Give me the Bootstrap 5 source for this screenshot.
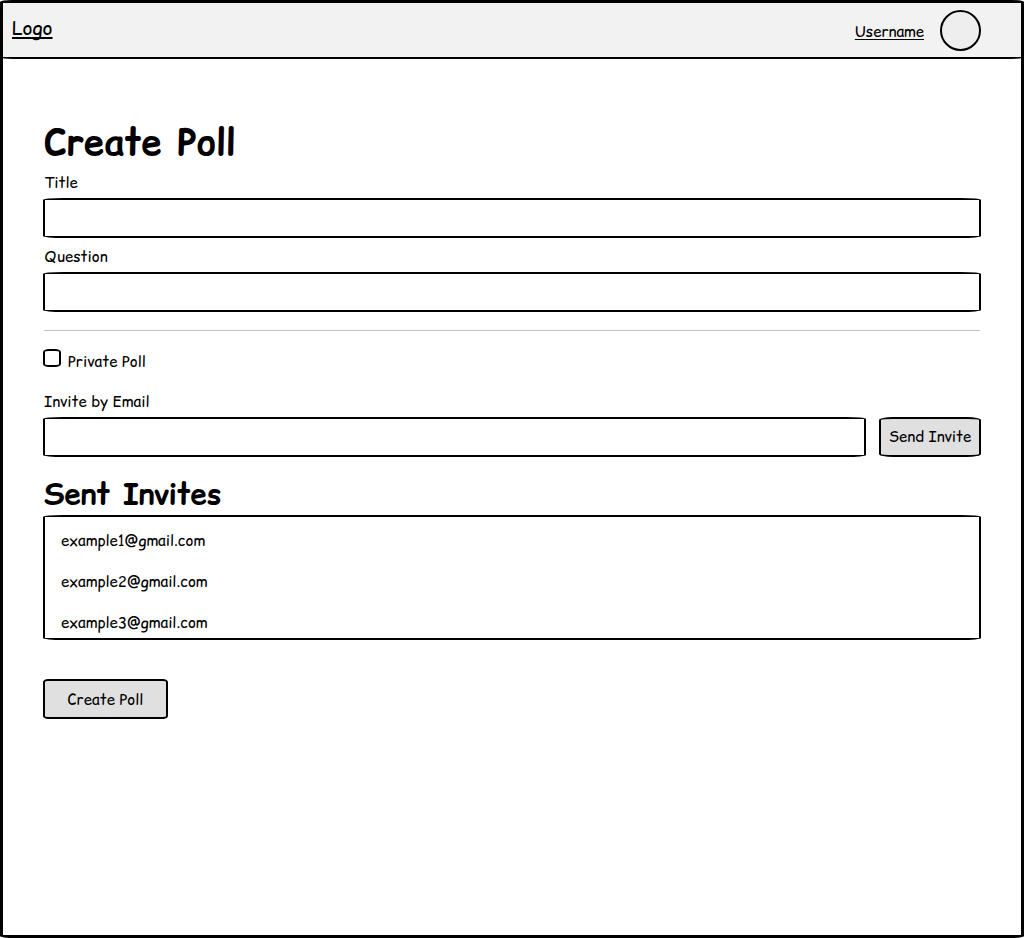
<!DOCTYPE html>
<html lang="en">
<head>
<meta charset="utf-8">
<meta name="viewport" content="width=device-width, initial-scale=1">
<title>Create Poll</title>
<link href="https://cdn.jsdelivr.net/npm/bootstrap@5.3.0/dist/css/bootstrap.min.css" rel="stylesheet">
<style>
  body { font: 400 15px/24px "Comic Relief", "Comic Neue", Lato, sans-serif; color: #000; }
  a { color: #000; text-underline-offset: 2px; text-decoration-thickness: 1px; text-decoration-skip-ink: none; }
  .frame { height: 938px; border: 3px solid #000; border-radius: 12px 12px 14px 14px / 2px; }
  .topbar { height: 56px; background: #f2f2f2; border-bottom: 2px solid #000; padding: 0 40px 0 9px; border-radius: 0 0 16px 16px / 0 0 1px 1px; }
  .logo { font-size: 19px; padding-bottom: 5px; text-decoration-thickness: 1.5px; }
  .avatar { width: 41px; height: 41px; border: 2px solid #000; background: #eee; }
  main { padding: 59px 40px 0; }
  h1 { font-size: 36.3px; line-height: 48px; font-weight: 700; margin-bottom: 5px; }
  h2 { font-size: 29.4px; line-height: 36px; font-weight: 700; margin: 19px 0 3px; }
  .label-text { padding-left: 1px; margin-bottom: 3px; display: block; }
  .question-label { margin-top: 7px; }
  .sketch, .sketch:focus { border: 2px solid #000; border-radius: 20px / 2px; height: 40px; background: #fff; box-shadow: none; }
  .sketch-btn { width: 102px; height: 40px; padding: 0; border: 2px solid #000; border-radius: 14px / 3px; background: #e0e0e0; font-size: 15px; line-height: 24px; color: #000; }
  .invite-row { gap: 13px; }
  .create { width: 125px; margin-top: 39px; padding-top: 2px; border-radius: 5px / 3px; }
  .rule { margin: 18px 1px; height: 1px; border: 0; background: #c0c0c0; opacity: 1; }
  .form-check-input.box { width: 18px; height: 18px; margin: 0; border: 2px solid #000; border-radius: 6px / 3px; }
  .private-label { margin: 1px 0 0 7px; }
  .invites { height: 125px; padding: 12px 16px 0; overflow: hidden; }
  .invites li { height: 41px; }
</style>
</head>
<body>
<div class="frame overflow-hidden">
  <header class="topbar d-flex align-items-center">
    <a class="logo" href="#">Logo</a>
    <a class="ms-auto me-3 pt-1" href="#">Username</a>
    <div class="avatar rounded-circle"></div>
  </header>
  <main>
    <h1><span class="label-text m-0">Create Poll</span></h1>
    <label class="label-text" for="title">Title</label>
    <input class="form-control sketch" id="title" type="text">
    <label class="label-text question-label" for="question">Question</label>
    <input class="form-control sketch" id="question" type="text">
    <hr class="rule">
    <div class="d-flex align-items-start">
      <input class="form-check-input box flex-shrink-0" id="private" type="checkbox">
      <label for="private" class="private-label">Private Poll</label>
    </div>
    <label class="label-text mt-3" for="email">Invite by Email</label>
    <div class="d-flex invite-row">
      <input class="form-control sketch flex-grow-1" id="email" type="email">
      <button class="btn sketch-btn flex-shrink-0" type="button">Send Invite</button>
    </div>
    <h2><span class="label-text m-0">Sent Invites</span></h2>
    <ul class="list-unstyled sketch invites mb-0">
      <li>example1@gmail.com</li>
      <li>example2@gmail.com</li>
      <li>example3@gmail.com</li>
    </ul>
    <button class="btn sketch-btn create" type="button">Create Poll</button>
  </main>
</div>
<script src="https://cdn.jsdelivr.net/npm/bootstrap@5.3.0/dist/js/bootstrap.bundle.min.js"></script>
</body>
</html>
